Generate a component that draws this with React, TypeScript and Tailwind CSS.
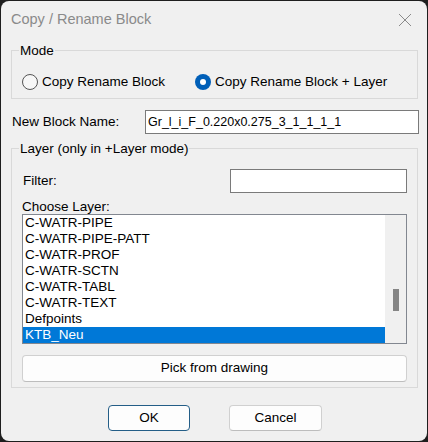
import { useState } from "react";

const layers = [
  "C-WATR-PIPE",
  "C-WATR-PIPE-PATT",
  "C-WATR-PROF",
  "C-WATR-SCTN",
  "C-WATR-TABL",
  "C-WATR-TEXT",
  "Defpoints",
  "KTB_Neu",
];

function Radio({ checked, label }: { checked: boolean; label: string }) {
  return (
    <div className="flex items-center gap-[4px] h-[16px]">
      {checked ? (
        <span className="w-[16px] h-[16px] rounded-full bg-[#005fb8] flex items-center justify-center">
          <span className="w-[6px] h-[6px] rounded-full bg-white" />
        </span>
      ) : (
        <span className="w-[16px] h-[16px] rounded-full border border-[#555555] bg-[#f7f7f7]" />
      )}
      <span>{label}</span>
    </div>
  );
}

export default function App() {
  const [selected, setSelected] = useState("KTB_Neu");

  return (
    <div
      className="w-[428px] h-[442px] bg-[#1e1e1e] p-px text-[13.5px] text-black"
      style={{ fontFamily: '"Liberation Sans", Arial, sans-serif' }}
    >
      <div className="h-full rounded-[8px] bg-[#f0f0f0] flex flex-col">
        {/* ---- Title bar ---- */}
        <div className="h-[41px] shrink-0 flex items-center justify-between pl-[10px] pr-[15px] pb-[3px]">
          <span className="text-[14.5px] text-[#8a8a8a]">Copy / Rename Block</span>
          <svg width="14" height="14" viewBox="0 0 14 14" className="text-[#8a8a8a]">
            <path d="M1 1 L13 13 M13 1 L1 13" stroke="currentColor" strokeWidth="1" fill="none" />
          </svg>
        </div>

        <div className="pl-[10px] pr-[8px] flex flex-col">
          {/* ---- Mode ---- */}
          <fieldset className="mr-[1px] border border-[#d9d9d9] px-[10px] pt-[15px] pb-[8px]">
            <legend className="-ml-[3px] px-[1px] leading-[17px]">Mode</legend>
            <div className="flex items-center gap-[30px]">
              <Radio checked={false} label="Copy Rename Block" />
              <Radio checked label="Copy Rename Block + Layer" />
            </div>
          </fieldset>

          {/* ---- New block name ---- */}
          <div className="mt-[11px] flex items-center justify-between">
            <span className="pl-px">New Block Name:</span>
            <div className="w-[274px] h-[24px] bg-white border border-[#7a7a7a] flex items-center px-[2px] text-[12.5px]">
              Gr_l_i_F_0.220x0.275_3_1_1_1_1
            </div>
          </div>

          {/* ---- Layer ---- */}
          <fieldset className="mt-[6px] mr-[1px] border border-[#d9d9d9] px-[10px] pt-[12px] pb-[5px]">
            <legend className="-ml-[3px] px-[1px] leading-[17px]">Layer (only in +Layer mode)</legend>
            <div className="flex items-center justify-between h-[24px]">
              <span className="pl-px">Filter:</span>
              <div className="w-[177px] h-[24px] bg-white border border-[#7a7a7a]" />
            </div>
            <div className="mt-[6px] leading-[15px]">Choose Layer:</div>
            <div className="h-[130px] bg-white border border-[#828790] flex">
              <div className="flex-1 flex flex-col">
                {layers.map((l) => (
                  <div
                    key={l}
                    onClick={() => setSelected(l)}
                    className={
                      "h-[16px] leading-[16px] pl-[2px] " +
                      (l === selected ? "bg-[#0078d7] text-white" : "")
                    }
                  >
                    {l}
                  </div>
                ))}
              </div>
              <div className="w-[21px] bg-[#f0f0f0] flex justify-center pt-[74px]">
                <div className="w-[6px] h-[22px] bg-[#858585]" />
              </div>
            </div>
            <button className="mt-[11px] w-full h-[27px] rounded-[4px] bg-[#fdfdfd] border border-[#d0d0d0] border-b-[#bdbdbd]">
              Pick from drawing
            </button>
          </fieldset>

          {/* ---- Buttons ---- */}
          <div className="mt-[17px] flex justify-center gap-[39px]">
            <button className="w-[82px] h-[26px] rounded-[4px] bg-[#fdfdfd] border border-[#245e87]">OK</button>
            <button className="w-[93px] h-[26px] rounded-[4px] bg-[#fdfdfd] border border-[#d0d0d0] border-b-[#bdbdbd]">
              Cancel
            </button>
          </div>
        </div>
      </div>
    </div>
  );
}
